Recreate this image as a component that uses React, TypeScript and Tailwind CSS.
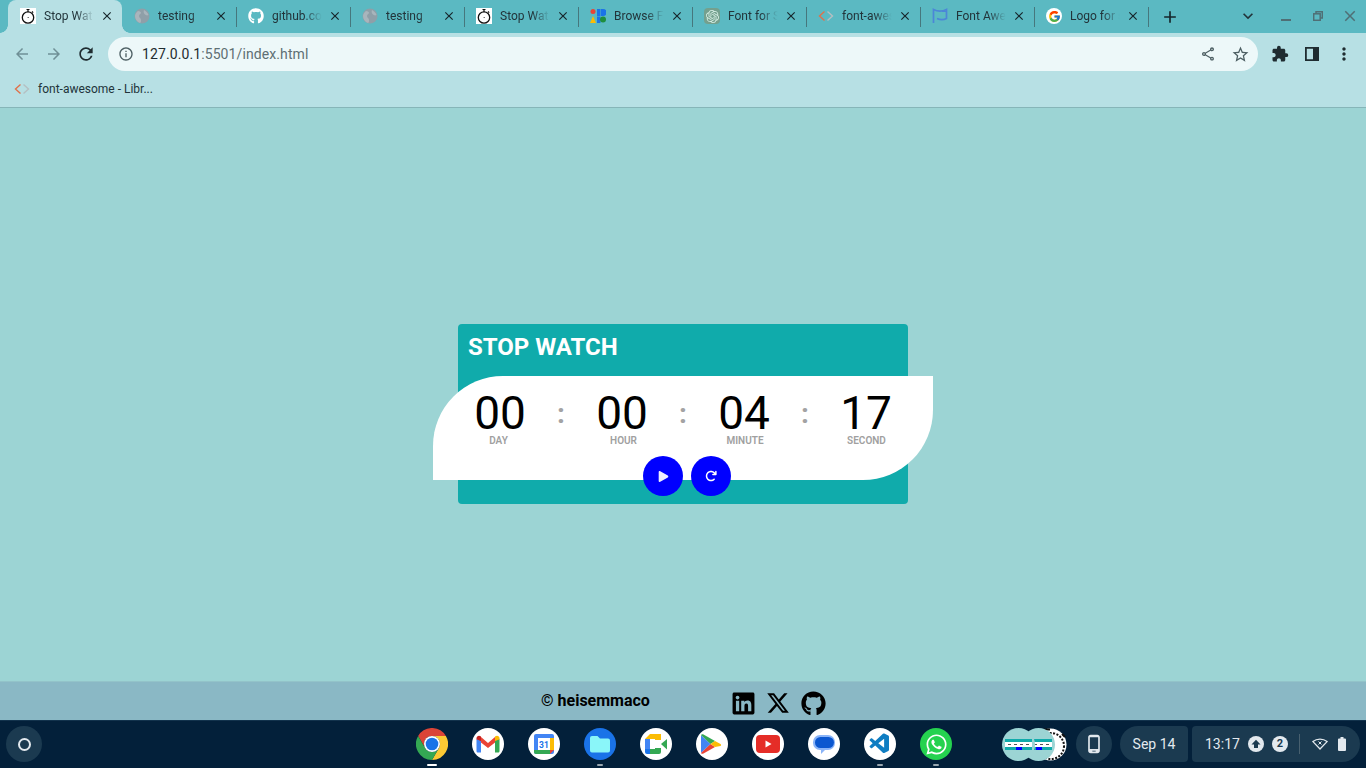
import React from 'react';
import {
  MdArrowBack, MdArrowForward, MdRefresh, MdInfoOutline, MdOutlineShare, MdStarBorder, MdExtension, MdClose, MdAdd,
  MdExpandMore, MdMoreVert, MdOutlinePhoneAndroid,
} from 'react-icons/md';
import { FaGithub, FaLinkedin, FaPlay, FaWhatsapp } from 'react-icons/fa';
import { FaArrowRotateRight, FaXTwitter } from 'react-icons/fa6';
import { FcGoogle } from 'react-icons/fc';
import { SiOpenai } from 'react-icons/si';
import { VscVscode } from 'react-icons/vsc';

const StopwatchIcon = () => (
  <svg viewBox="0 0 16 16" className="w-4 h-4 bg-white">
    <circle cx="8" cy="9.500" r="5.700" fill="none" stroke="#111" strokeWidth="1.300" />
    <path d="M6.500 1.500h3M8 1.500v2.500M12 3.500l1.200 1.200" stroke="#111" strokeWidth="1.200" fill="none" />
    <path d="M7.500 9.500h1.500" stroke="#777" strokeWidth="1" />
  </svg>
);

const GlobeIcon = () => (
  <svg viewBox="0 0 16 16" className="w-4 h-4">
    <circle cx="8" cy="8" r="7.500" fill="#8f9fa8" />
    <path d="M4 3c2 0 3 1 3 2S5 6 5 8s2 2 2 4 0 2.500-1 3C3 14 1 11 1 8c0-2 1.500-4 3-5zM10 2c2 1 4 3 4.500 5-1.500 1-3 0-4-1s-1-3-.5-4z" fill="#a9b5bc" />
  </svg>
);

const AngleIcon = () => (
  <svg viewBox="0 0 16 16" className="w-4 h-4" fill="none" strokeWidth="1.400">
    <path d="M6.500 3.500L1.500 8l5 4.500" stroke="#e0714a" />
    <path d="M9.500 3.500l5 4.500-5 4.500" stroke="#b5bfc2" />
  </svg>
);

const FontsIcon = () => (
  <svg viewBox="0 0 16 16" className="w-4 h-4">
    <circle cx="3" cy="3.500" r="2.500" fill="#ea4335" />
    <path d="M0 15l3-7 3 7z" fill="#fbbc04" />
    <path d="M7 1h3.500v7H7z" fill="#1a73e8" />
    <path d="M11 1h2a3 3 0 010 7h-2z" fill="#1a73e8" />
    <path d="M7 8.500h3.500V15H7z" fill="#1a73e8" />
    <circle cx="13" cy="11.500" r="3" fill="#1e8e3e" />
  </svg>
);

const GptIcon = () => (
  <span className="w-4 h-4 rounded-sm bg-[#74a08e] flex items-center justify-center text-[#d8efe6]">
    <SiOpenai size={13} />
  </span>
);

const FlagIcon = () => (
  <svg viewBox="0 0 16 16" className="w-4 h-4" fill="none" stroke="#4b86d8" strokeWidth="1.700">
    <path d="M1.500 15V1.500c4 2 9 2 13 0v9c-3 1.500-6 1.500-9.500 0" />
    <path d="M14.500 3.500H10" strokeWidth="1" />
  </svg>
);

const GithubFav = () => <FaGithub size={16} color="#fff" />;

const GoogleFav = () => (
  <span className="w-4 h-4 rounded-full bg-white flex items-center justify-center">
    <FcGoogle size={13} />
  </span>
);

const tabs = [
  { title: 'Stop Wat', icon: <StopwatchIcon /> },
  { title: 'testing', icon: <GlobeIcon /> },
  { title: 'github.co', icon: <GithubFav /> },
  { title: 'testing', icon: <GlobeIcon /> },
  { title: 'Stop Wat', icon: <StopwatchIcon /> },
  { title: 'Browse F', icon: <FontsIcon /> },
  { title: 'Font for S', icon: <GptIcon /> },
  { title: 'font-awes', icon: <AngleIcon /> },
  { title: 'Font Awe', icon: <FlagIcon /> },
  { title: 'Logo for s', icon: <GoogleFav /> },
];

const TabStrip = () => (
  <div className="h-[33px] bg-[#5bb9c2] flex pl-2 shrink-0">
    {tabs.map((tab, i) => {
      const active = i === 0;
      return (
        <div
          key={i}
          className={`relative w-[114px] h-[33px] flex items-center pl-3 pb-px ${active ? 'bg-[#b7e0e4] rounded-t-lg' : ''}`}
        >
          {active && (
            <>
              <span className="absolute -left-2 bottom-0 w-2 h-2 bg-[radial-gradient(circle_at_0_0,#5bb9c2_7.500px,#b7e0e4_8px)]" />
              <span className="absolute -right-2 bottom-0 w-2 h-2 bg-[radial-gradient(circle_at_100%_0,#5bb9c2_7.500px,#b7e0e4_8px)]" />
            </>
          )}
          {i > 1 && <span className="absolute left-0 top-[7px] h-5 w-px bg-[#46777d]" />}
          <span className="w-4 h-4 shrink-0 flex items-center justify-center">{tab.icon}</span>
          <span className="ml-2 w-[54px] whitespace-nowrap text-xs leading-4 text-[#22343a] [mask-image:linear-gradient(to_right,black_60%,transparent_92%)]">
            {tab.title}
          </span>
          <MdClose size={14} className="absolute left-[92px] top-[9px] text-[#16262b]" />
        </div>
      );
    })}
    <div className="relative w-[36px] flex items-center justify-center">
      <span className="absolute left-0 top-[7px] h-5 w-px bg-[#46777d]" />
      <MdAdd size={20} className="text-[#16262b] ml-[8px]" />
    </div>
    <div className="flex-1 flex items-center justify-end pb-px">
      <MdExpandMore size={20} className="text-[#22343a] mr-[12px]" />
      <div className="w-[32px] flex justify-center">
        <span className="w-[10px] h-[2px] bg-[#4f6f75] mt-[8px]" />
      </div>
      <div className="w-[32px] flex justify-center">
        <svg viewBox="0 0 10 10" className="w-[10px] h-[10px]" fill="none" stroke="#4f6f75" strokeWidth="1.500">
          <path d="M3 2.500V.7h6.300V7H7.500" />
          <rect x=".7" y="2.800" width="6.500" height="6.500" />
        </svg>
      </div>
      <div className="w-[32px] flex justify-center">
        <MdClose size={18} className="text-[#4f6f75]" />
      </div>
    </div>
  </div>
);

const AddressBar = () => (
  <div className="h-[38px] bg-[#b7e0e4] flex pt-1 shrink-0">
    <div className="w-[108px] h-[34px] flex items-center">
      <MdArrowBack size={18} className="ml-[13px] text-[#6f9096]" />
      <MdArrowForward size={18} className="ml-[14px] text-[#6f9096]" />
      <MdRefresh size={20} className="ml-[13px] text-[#1f2c30]" />
    </div>
    <div className="w-[1150px] h-[34px] rounded-full bg-[#edf8f9] flex items-center pl-[10px] pr-[7px]">
      <MdInfoOutline size={16} className="text-[#4d5f63]" />
      <span className="ml-[8px] text-sm text-[#1f2c30] tracking-[0.1px]">
        127.0.0.1<span className="text-[#5e6f73]">:5501/index.html</span>
      </span>
      <MdOutlineShare size={16} className="ml-auto text-[#4d5f63]" />
      <MdStarBorder size={19} className="ml-[15px] mr-[1px] text-[#4d5f63]" />
    </div>
    <div className="flex-1 h-[34px] flex items-center text-[#1f2c30]">
      <MdExtension size={18} className="ml-[13px]" />
      <svg viewBox="0 0 14 14" className="w-[14px] h-[14px] ml-[16px]">
        <path d="M0 0h14v14H0zM1.800 1.800v10.400H8V1.800z" fill="#1f2c30" fillRule="evenodd" />
      </svg>
      <MdMoreVert size={20} className="ml-[15px]" />
    </div>
  </div>
);

const BookmarkBar = () => (
  <div className="h-[37px] bg-[#b7e0e4] border-b border-[#86b5b8] flex items-center pl-[14px] shrink-0">
    <AngleIcon />
    <span className="ml-2 text-xs text-[#22343a]">font-awesome - Libr...</span>
  </div>
);

const TimeUnit = ({ value, label, labelClass }: { value: string; label: string; labelClass: string }) => (
  <div className="w-[90px] flex flex-col items-center">
    <span className="text-[46px] leading-[44px] text-black">{value}</span>
    <span className={`mt-px text-[10px] leading-[10px] font-semibold text-[#a0a0a0] ${labelClass}`}>{label}</span>
  </div>
);

const Colon = () => (
  <div className="w-8 h-[44px] flex items-center justify-center text-[28px] font-bold leading-[44px] text-[#a3a3a3] pt-[1px]">:</div>
);

const StopWatchCard = () => (
  <div className="w-[450px] h-[180px] rounded bg-[#10abab] px-[10px] pt-[9px]">
    <h1 className="text-2xl leading-7 font-bold text-white">STOP WATCH</h1>
    <div className="relative w-[500px] h-[104px] -ml-[35px] mt-[15px] bg-white rounded-tl-[70px] rounded-br-[70px] pt-[15px] flex justify-center items-start">
      <TimeUnit value="00" label="DAY" labelClass="-ml-[3px]" />
      <Colon />
      <TimeUnit value="00" label="HOUR" labelClass="ml-[3px]" />
      <Colon />
      <TimeUnit value="04" label="MINUTE" labelClass="ml-[2px]" />
      <Colon />
      <TimeUnit value="17" label="SECOND" labelClass="ml-[1px]" />
      <div className="absolute left-[210px] top-[80px] flex gap-2">
        <button className="w-10 h-10 rounded-full bg-[#0000ff] flex items-center justify-center text-[#eef]">
          <FaPlay size={11} />
        </button>
        <button className="w-10 h-10 rounded-full bg-[#0000ff] flex items-center justify-center text-white">
          <FaArrowRotateRight size={12} />
        </button>
      </div>
    </div>
  </div>
);

const Footer = () => (
  <div className="h-[39px] bg-[#8ab8c5] border-t border-[#93c3c9] flex items-center pl-[541px] shrink-0 text-black">
    <span className="w-[190px] text-base font-bold">© heisemmaco</span>
    <FaLinkedin size={25} className="mt-[4px]" />
    <FaXTwitter size={24} className="ml-[10px] mt-[4px]" />
    <FaGithub size={25} className="ml-[11px] mt-[4px]" />
  </div>
);

const ChromeLogo = () => (
  <svg viewBox="0 0 48 48" className="w-8 h-8">
    <path d="M3.200 12A24 24 0 0144.800 12H24A12 12 0 0013.600 30z" fill="#db4437" />
    <path d="M44.800 12A24 24 0 0124 48L34.400 30A12 12 0 0024 12z" fill="#fcc934" />
    <path d="M24 48A24 24 0 013.200 12L13.600 30A12 12 0 0034.400 30z" fill="#34a853" />
    <circle cx="24" cy="24" r="12" fill="#fff" />
    <circle cx="24" cy="24" r="9.500" fill="#1a73e8" />
  </svg>
);

const GmailLogo = () => (
  <svg viewBox="0 0 32 32" className="w-8 h-8">
    <circle cx="16" cy="16" r="16" fill="#fff" />
    <path d="M4.500 11l4.500-2 7 6 7-6 4.500 2-11.500 9z" fill="#ea4335" />
    <path d="M4.500 11v12c0 1 .6 1.500 1.500 1.500h3V13z" fill="#4285f4" />
    <path d="M27.500 11v12c0 1-.6 1.500-1.500 1.500h-3V13z" fill="#34a853" />
    <path d="M23 13V8.500c2-1.500 4.500-.5 4.500 2v.8z" fill="#fbbc04" />
    <path d="M4.500 11.300v-.8c0-2.500 2.500-3.500 4.500-2V13z" fill="#c5221f" />
  </svg>
);

const CalendarLogo = () => (
  <svg viewBox="0 0 32 32" className="w-8 h-8">
    <circle cx="16" cy="16" r="16" fill="#fff" />
    <rect x="6" y="6" width="20" height="20" rx="2" fill="#4285f4" />
    <path d="M22 10h4v12h-4z" fill="#fbbc04" />
    <path d="M6 22h16v4H8a2 2 0 01-2-2z" fill="#34a853" />
    <path d="M22 22h4l-4 4z" fill="#ea4335" />
    <rect x="10" y="10" width="12" height="12" fill="#fff" />
    <text x="16" y="20" textAnchor="middle" fontSize="8.500" fontWeight="700" fill="#1a73e8" fontFamily="Roboto, sans-serif">31</text>
  </svg>
);

const FilesLogo = () => (
  <svg viewBox="0 0 32 32" className="w-8 h-8">
    <circle cx="16" cy="16" r="16" fill="#1a73e8" />
    <path d="M6 10a2 2 0 012-2h5.500l2.500 2.500h8a2 2 0 012 2v10a2 2 0 01-2 2H8a2 2 0 01-2-2z" fill="#8af6f9" />
  </svg>
);

const MeetLogo = () => (
  <svg viewBox="0 0 32 32" className="w-8 h-8">
    <circle cx="16" cy="16" r="16" fill="#fff" />
    <path d="M5 11l5-5h11v6h-6v-1z" fill="#fbbc04" />
    <path d="M5 11h5v10H5z" fill="#4285f4" />
    <path d="M5 21h5v5H7a2 2 0 01-2-2z" fill="#1a73e8" />
    <path d="M10 21h5v-1h6v4a2 2 0 01-2 2h-9z" fill="#34a853" />
    <path d="M21 16l6-5v10.500z" fill="#34a853" />
    <path d="M15 12h6v8h-6z" fill="#fff" />
  </svg>
);

const PlayLogo = () => (
  <svg viewBox="0 0 32 32" className="w-8 h-8">
    <circle cx="16" cy="16" r="16" fill="#fff" />
    <path d="M5 7v18l9.500-9z" fill="#4285f4" />
    <path d="M5 7c.5-1 1.500-1 2.500-.5L19 13l-4.500 3z" fill="#34a853" />
    <path d="M5 25c.5 1 1.500 1 2.500.5L19 19l-4.500-3z" fill="#ea4335" />
    <path d="M19 13l5.500 3c.8.500.8 1.500 0 2L19 19l-4.500-3z" fill="#fbbc04" />
  </svg>
);

const YoutubeLogo = () => (
  <svg viewBox="0 0 32 32" className="w-8 h-8">
    <circle cx="16" cy="16" r="16" fill="#fff" />
    <rect x="4" y="7" width="24" height="18" rx="4" fill="#e52d27" />
    <path d="M13.500 12.500v7l6-3.500z" fill="#fff" />
  </svg>
);

const MessagesLogo = () => (
  <svg viewBox="0 0 32 32" className="w-8 h-8">
    <circle cx="16" cy="16" r="16" fill="#fff" />
    <path d="M12 7h8a7 7 0 017 7v1a7 7 0 01-7 7h-3l-4 4v-4h-1a7 7 0 01-7-7v-1a7 7 0 017-7z" fill="#8ab4f8" />
    <rect x="7" y="9" width="19" height="11" rx="5.500" fill="#0b57d0" />
  </svg>
);

const VscodeLogo = () => (
  <span className="w-8 h-8 rounded-full bg-white flex items-center justify-center text-[#0f7dc2]">
    <VscVscode size={24} />
  </span>
);

const WhatsappLogo = () => (
  <span className="w-8 h-8 rounded-full bg-[#25d24f] flex items-center justify-center text-white">
    <FaWhatsapp size={23} />
  </span>
);

const shelfApps = [
  { logo: <ChromeLogo />, dot: 'w-[10px] bg-white' },
  { logo: <GmailLogo />, dot: '' },
  { logo: <CalendarLogo />, dot: '' },
  { logo: <FilesLogo />, dot: 'w-[6px] bg-[#9aa7b0]' },
  { logo: <MeetLogo />, dot: '' },
  { logo: <PlayLogo />, dot: '' },
  { logo: <YoutubeLogo />, dot: '' },
  { logo: <MessagesLogo />, dot: '' },
  { logo: <VscodeLogo />, dot: 'w-[6px] bg-[#9aa7b0]' },
  { logo: <WhatsappLogo />, dot: 'w-[6px] bg-[#9aa7b0]' },
];

const MiniWindow = () => (
  <div className="w-[33px] h-[33px] rounded-full bg-[#9cd4d4] flex flex-col items-center justify-center">
    <div className="w-[27px] h-[3px] bg-[#10abab]" />
    <div className="w-[27px] h-[5px] bg-white flex items-center justify-around px-[2px]">
      <span className="w-[3px] h-px bg-[#555]" />
      <span className="w-[3px] h-px bg-[#555]" />
      <span className="w-[3px] h-px bg-[#555]" />
      <span className="w-[3px] h-px bg-[#555]" />
    </div>
    <div className="w-[27px] h-[3px] bg-[#10abab] flex justify-center">
      <span className="w-[6px] h-[3px] bg-[#0000ff]" />
    </div>
  </div>
);

const Shelf = () => (
  <div className="h-[48px] bg-[#03203a] border-t border-[#12324c] flex items-center pb-px shrink-0 text-[#e3e9ee] relative">
    <div className="w-9 h-9 ml-[6px] rounded-full bg-[#1b3a50] flex items-center justify-center">
      <span className="w-[13px] h-[13px] rounded-full border-2 border-[#e3e9ee]" />
    </div>
    <div className="ml-[374px] flex gap-6">
      {shelfApps.map((app, i) => (
        <div key={i} className="relative w-8 h-8">
          {app.logo}
          {app.dot && <span className={`absolute top-[36px] left-1/2 -translate-x-1/2 h-[2px] rounded-full ${app.dot}`} />}
        </div>
      ))}
    </div>
    <div className="ml-[50px] flex items-center">
      <div className="relative z-20"><MiniWindow /></div>
      <div className="relative z-10 -ml-[13px]"><MiniWindow /></div>
      <div className="-ml-[21px] w-[33px] h-[33px]">
        <svg viewBox="0 0 33 33" className="w-[33px] h-[33px]">
          <circle cx="16.500" cy="16.500" r="16" fill="#fff" />
          <circle cx="17" cy="18" r="13" fill="none" stroke="#111" strokeWidth="2" strokeDasharray="2 1.500" />
          <path d="M10 1.500h6M28 6l3 3" stroke="#111" strokeWidth="2" />
        </svg>
      </div>
    </div>
    <div className="ml-[9px] w-9 h-9 rounded-full bg-[#1b3a50] flex items-center justify-center">
      <MdOutlinePhoneAndroid size={20} />
    </div>
    <div className="ml-2 w-[68px] h-9 rounded-l-[18px] rounded-r bg-[#1b3a50] flex items-center justify-center text-sm">
      Sep 14
    </div>
    <div className="ml-1 w-[168px] h-9 rounded-r-[18px] rounded-l bg-[#1b3a50] flex items-center pl-[13px] text-sm">
      <span className="w-[43px] whitespace-nowrap">13:17</span>
      <span className="w-4 h-4 rounded-full bg-[#e3e9ee] flex items-center justify-center">
        <svg viewBox="0 0 10 10" className="w-[10px] h-[10px]">
          <path d="M5 .8L9.500 5.500H7V9H3V5.500H.5z" fill="#1b3a50" />
        </svg>
      </span>
      <span className="ml-2 w-4 h-4 rounded-full bg-[#e3e9ee] flex items-center justify-center text-[11px] font-bold text-[#1b3a50]">2</span>
      <span className="ml-[11px] w-px h-5 bg-[#48606f]" />
      <svg viewBox="0 0 16 12" className="ml-[12px] w-4 h-3" fill="none" stroke="#e3e9ee" strokeWidth="1.300">
        <path d="M.9 3.600C5 .3 11 .3 15.100 3.600L8 11z" />
        <path d="M6.500 3.500l3 3M9.500 3.500l-3 3" strokeWidth="1" />
      </svg>
      <svg viewBox="0 0 8 14" className="ml-[10px] w-2 h-[14px]">
        <path d="M2.500 0h3v1.500H7a1 1 0 011 1V13a1 1 0 01-1 1H1a1 1 0 01-1-1V2.500a1 1 0 011-1h1.500z" fill="#e3e9ee" />
      </svg>
    </div>
  </div>
);

export default function App() {
  return (
    <div className="w-full h-[768px] overflow-hidden flex flex-col bg-[#9cd4d4] [font-family:Roboto,sans-serif]">
      <TabStrip />
      <AddressBar />
      <BookmarkBar />
      <main className="flex-1 flex justify-center pt-[216px]">
        <StopWatchCard />
      </main>
      <Footer />
      <Shelf />
    </div>
  );
}
